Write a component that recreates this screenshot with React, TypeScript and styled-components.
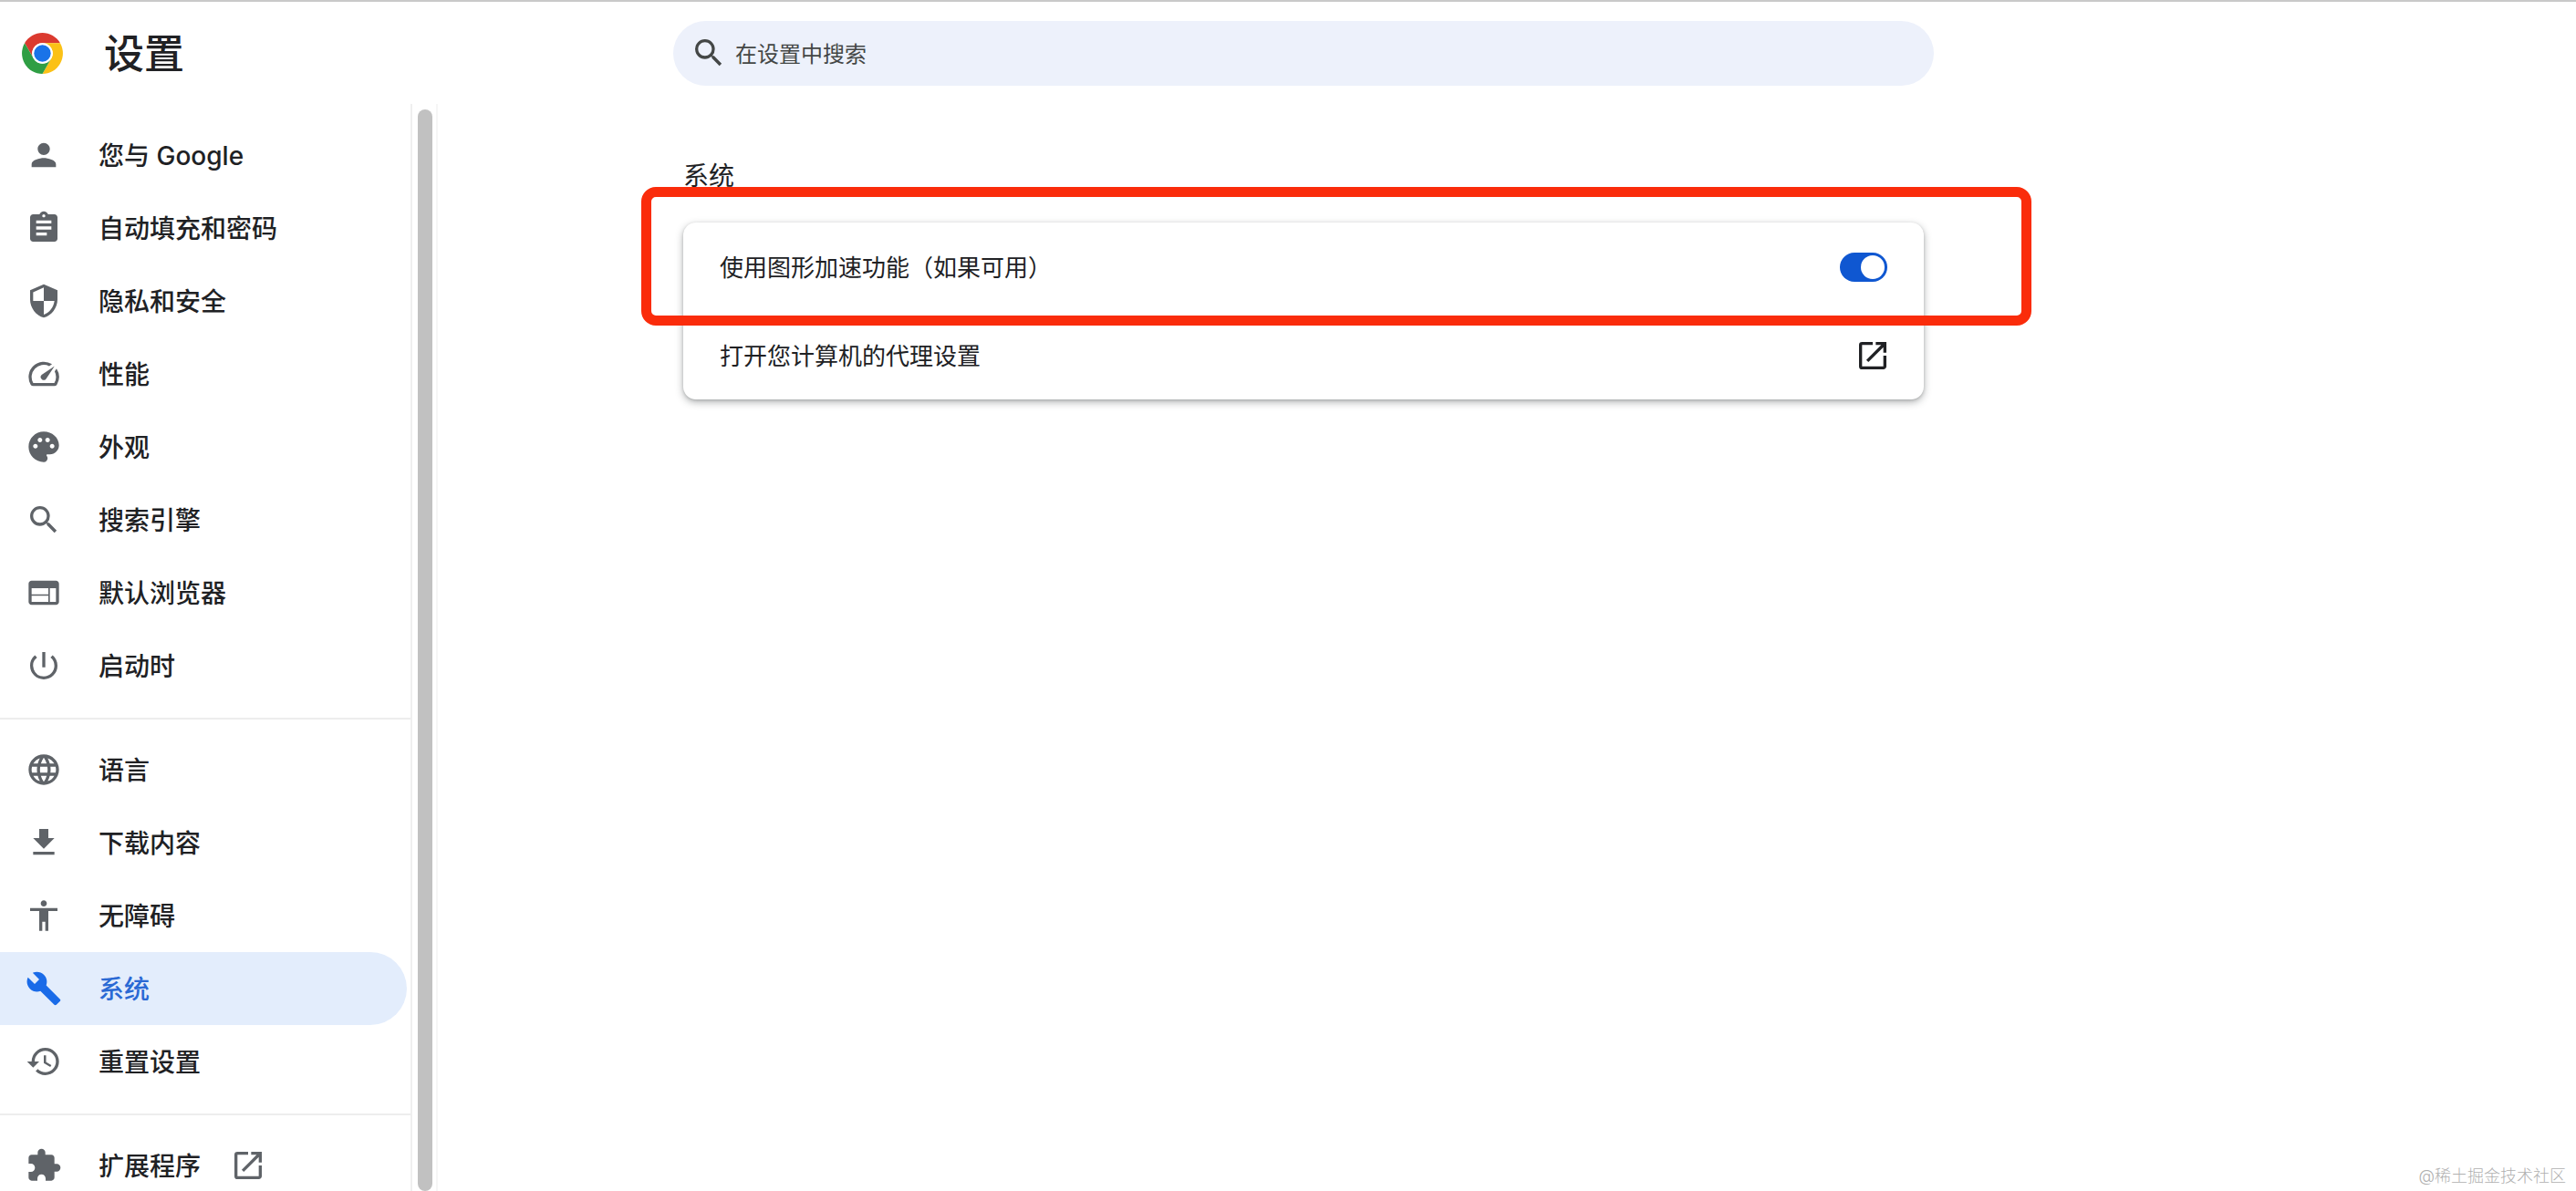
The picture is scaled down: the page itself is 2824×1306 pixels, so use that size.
import React from "react";
import styled, { createGlobalStyle } from "styled-components";
import {
  MdPerson,
  MdAssignment,
  MdSecurity,
  MdSpeed,
  MdPalette,
  MdSearch,
  MdWeb,
  MdPowerSettingsNew,
  MdLanguage,
  MdFileDownload,
  MdAccessibility,
  MdBuild,
  MdRestore,
  MdExtension,
  MdOpenInNew,
} from "react-icons/md";

const GlobalStyle = createGlobalStyle`
  html, body {
    margin: 0;
    padding: 0;
    background: #fff;
  }
  body {
    font-family: Inter, "Noto Sans CJK SC", sans-serif;
    color: #202124;
  }
`;

const Page = styled.div`
  position: relative;
  height: 100vh;
  overflow: hidden;
  border-top: 2px solid #c9c9c9;
  box-sizing: border-box;
  display: flex;
  flex-direction: column;
`;

const Header = styled.header`
  height: 112px;
  flex: none;
  display: flex;
  align-items: center;
`;

const Brand = styled.div`
  width: 738px;
  flex: none;
  display: flex;
  align-items: center;
  padding-left: 22px;
  box-sizing: border-box;
`;

const Title = styled.h1`
  margin: 2px 0 0 43px;
  font-size: 44px;
  line-height: 56px;
  font-weight: 500;
  color: #202124;
`;

const SearchBox = styled.div`
  width: 1382px;
  height: 71px;
  border-radius: 36px;
  background: #edf1fb;
  display: flex;
  align-items: center;
  padding-left: 19px;
  box-sizing: border-box;
  color: #444746;
  font-size: 24px;
  gap: 9px;
`;

const SearchText = styled.span`
  padding-bottom: 2px;
`;

const Body = styled.div`
  flex: 1;
  min-height: 0;
  display: flex;
`;

const Sidebar = styled.nav`
  width: 450px;
  flex: none;
  padding-top: 16px;
  box-sizing: border-box;
`;

const NavRow = styled.div<{ $active?: boolean }>`
  width: 446px;
  height: 80px;
  display: flex;
  align-items: center;
  padding-left: 28px;
  box-sizing: border-box;
  border-radius: 0 40px 40px 0;
  font-size: 28px;
  font-weight: 500;
  background: ${(p) => (p.$active ? "#e3edfc" : "transparent")};
  color: ${(p) => (p.$active ? "#2a69d4" : "#202124")};

  svg {
    color: ${(p) => (p.$active ? "#1a6be8" : "#5f6368")};
    flex: none;
  }
`;

const NavLabel = styled.span`
  margin-left: 40px;
  padding-bottom: 2px;
  white-space: nowrap;
`;

const NavLink = styled.span`
  margin-left: 32px;
  display: flex;
`;

const Divider = styled.div`
  height: 2px;
  margin: 17px 0 15px;
  background: #ededed;
`;

const ScrollTrack = styled.div`
  width: 30px;
  flex: none;
  padding: 6px 6px 0;
  border-left: 2px solid #efefef;
  border-right: 2px solid #f6f6f6;
  box-sizing: border-box;
`;

const ScrollThumb = styled.div`
  height: 100%;
  width: 16px;
  border-radius: 8px;
  background: #c1c1c1;
`;

const Main = styled.main`
  flex: 1;
  padding: 61px 0 0 269px;
  box-sizing: border-box;
`;

const Section = styled.section`
  position: relative;
  width: 1360px;
`;

const SectionTitle = styled.h2`
  margin: 0 0 33px;
  font-size: 28px;
  line-height: 36px;
  font-weight: 400;
  color: #202124;
`;

const Card = styled.div`
  border-radius: 14px;
  background: #fff;
  box-shadow: 0 3px 8px rgba(60, 64, 67, 0.4), 0 1px 3px rgba(60, 64, 67, 0.2);
`;

const SettingRow = styled.div`
  height: 97px;
  display: flex;
  align-items: center;
  justify-content: space-between;
  padding: 0 40px 0 40px;
  font-size: 26px;
  color: #202124;

  svg {
    margin-right: -4px;
  }
`;

const SettingLabel = styled.span`
  padding-bottom: 2px;
`;

const Toggle = styled.div`
  width: 52px;
  height: 32px;
  border-radius: 16px;
  background: #0f57d1;
  display: flex;
  align-items: center;
  justify-content: flex-end;
  padding-right: 3px;
  box-sizing: border-box;
`;

const Knob = styled.div`
  width: 26px;
  height: 26px;
  border-radius: 50%;
  background: #fff;
`;

// red annotation drawn on top of the screenshot
const Highlight = styled.div`
  position: absolute;
  left: -46px;
  right: -118px;
  top: 30px;
  height: 152px;
  border: 11px solid #fa2c0b;
  border-radius: 16px;
  box-sizing: border-box;
  pointer-events: none;
`;

const Watermark = styled.div`
  position: absolute;
  right: 11px;
  bottom: 5px;
  font-size: 18px;
  line-height: 22px;
  color: #b0b0b0;
  font-weight: 300;
`;

const ChromeLogo = () => (
  <svg width="49" height="49" viewBox="0 0 48 48">
    <path d="M24 13H43.05A22 22 0 0 0 4.95 13L14.47 29.5A11 11 0 0 1 24 13Z" fill="#db3a2f" />
    <path d="M24 13H43.05A22 22 0 0 1 24 46L33.53 29.5A11 11 0 0 0 24 13Z" fill="#fbc116" />
    <path d="M4.95 13A22 22 0 0 0 24 46L33.53 29.5A11 11 0 0 1 14.47 29.5Z" fill="#2f9e44" />
    <circle cx="24" cy="24" r="11" fill="#fff" />
    <circle cx="24" cy="24" r="9" fill="#1a73e8" />
  </svg>
);

const topItems = [
  { icon: MdPerson, label: "您与 Google" },
  { icon: MdAssignment, label: "自动填充和密码" },
  { icon: MdSecurity, label: "隐私和安全" },
  { icon: MdSpeed, label: "性能" },
  { icon: MdPalette, label: "外观" },
  { icon: MdSearch, label: "搜索引擎" },
  { icon: MdWeb, label: "默认浏览器" },
  { icon: MdPowerSettingsNew, label: "启动时" },
];

const moreItems = [
  { icon: MdLanguage, label: "语言" },
  { icon: MdFileDownload, label: "下载内容" },
  { icon: MdAccessibility, label: "无障碍" },
  { icon: MdBuild, label: "系统", active: true },
  { icon: MdRestore, label: "重置设置" },
];

const App = () => {
  return (
    <Page>
      <GlobalStyle />
      <Header>
        <Brand>
          <ChromeLogo />
          <Title>设置</Title>
        </Brand>
        <SearchBox>
          <MdSearch size={40} />
          <SearchText>在设置中搜索</SearchText>
        </SearchBox>
      </Header>
      <Body>
        <Sidebar>
          {topItems.map((item) => (
            <NavRow key={item.label}>
              <item.icon size={40} />
              <NavLabel>{item.label}</NavLabel>
            </NavRow>
          ))}
          <Divider />
          {moreItems.map((item) => (
            <NavRow key={item.label} $active={item.active}>
              <item.icon size={40} />
              <NavLabel>{item.label}</NavLabel>
            </NavRow>
          ))}
          <Divider />
          <NavRow>
            <MdExtension size={40} />
            <NavLabel>扩展程序</NavLabel>
            <NavLink>
              <MdOpenInNew size={40} />
            </NavLink>
          </NavRow>
        </Sidebar>
        <ScrollTrack>
          <ScrollThumb />
        </ScrollTrack>
        <Main>
          <Section>
            <SectionTitle>系统</SectionTitle>
            <Card>
              <SettingRow>
                <SettingLabel>使用图形加速功能（如果可用）</SettingLabel>
                <Toggle>
                  <Knob />
                </Toggle>
              </SettingRow>
              <SettingRow>
                <SettingLabel>打开您计算机的代理设置</SettingLabel>
                <MdOpenInNew size={40} />
              </SettingRow>
            </Card>
            <Highlight />
          </Section>
        </Main>
      </Body>
      <Watermark>@稀土掘金技术社区</Watermark>
    </Page>
  );
};

export default App;
